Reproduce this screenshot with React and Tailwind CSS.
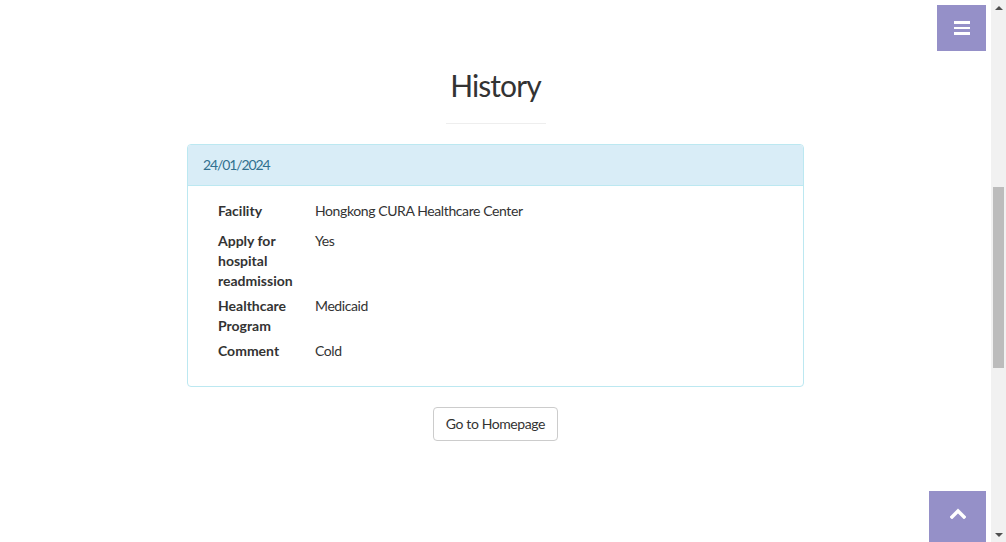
const rows = [
  { label: 'Facility', value: 'Hongkong CURA Healthcare Center', gap: 'mt-0' },
  { label: 'Apply for hospital readmission', value: 'Yes', gap: 'mt-[10px]' },
  { label: 'Healthcare Program', value: 'Medicaid', gap: 'mt-[5px]' },
  { label: 'Comment', value: 'Cold', gap: 'mt-[5px]' },
];

const Scrollbar = () => (
  <div className="flex h-full w-[15px] shrink-0 flex-col items-center bg-[#f1f1f1]">
    <div className="flex h-[15px] w-full items-center justify-center">
      <div className="h-0 w-0 border-x-[4px] border-b-[4px] border-x-transparent border-b-[#505050]" />
    </div>
    <div className="mt-[172px] h-[181px] w-[11px] bg-[#bcbcbc]" />
    <div className="flex-1" />
    <div className="flex h-[15px] w-full items-center justify-center">
      <div className="h-0 w-0 border-x-[4px] border-t-[4px] border-x-transparent border-t-[#505050]" />
    </div>
  </div>
);

const App = () => {
  return (
    <div className="relative flex h-[542px] w-[1006px] overflow-hidden bg-white text-[#333] font-['Lato','Liberation_Sans',sans-serif]">
      <main className="flex-1">
        <section className="flex flex-col items-center pt-[69px]">
          <h2 className="text-[30px] leading-[33px] font-normal tracking-[-0.9px] text-[#333]">History</h2>
          <div className="mt-[21px] w-[100px] border-t border-[#eee]" />

          <div className="mt-[20px] w-[617px] rounded-[4px] border border-[#bce8f1] overflow-hidden">
            <div className="bg-[#d9edf7] border-b border-[#bce8f1] px-[15px] py-[10px] text-[14px] leading-[20px] tracking-[-1.1px] text-[#31708f]">
              24/01/2024
            </div>
            <div className="px-[30px] pt-[15px] pb-[25px] text-[14px] leading-[20px]">
              {rows.map((r) => (
                <div key={r.label} className={`flex ${r.gap}`}>
                  <div className="w-[82px] shrink-0 font-bold">{r.label}</div>
                  <div className="ml-[15px] tracking-[-0.4px]">{r.value}</div>
                </div>
              ))}
            </div>
          </div>

          <button className="mt-[20px] rounded-[4px] border border-[#ccc] bg-white px-[12px] py-[6px] text-[14px] leading-[20px] tracking-[-0.4px] text-[#333]">
            Go to Homepage
          </button>
        </section>
      </main>

      <Scrollbar />

      {/* menu toggle */}
      <button className="absolute top-[5px] right-[20px] flex h-[46px] w-[49px] flex-col items-center justify-center gap-[3px] bg-[#9590c8]">
        <span className="block h-[2.5px] w-[16px] bg-white" />
        <span className="block h-[2.5px] w-[16px] bg-white" />
        <span className="block h-[2.5px] w-[16px] bg-white" />
      </button>

      {/* back to top */}
      <button className="absolute bottom-0 right-[20px] flex h-[51px] w-[57px] items-center justify-center bg-[#9590c8]">
        <svg width="16" height="11" viewBox="0 0 16 11" className="mb-[6px]">
          <polyline points="2,9 8,3 14,9" fill="none" stroke="white" strokeWidth="3.4" strokeLinecap="square" />
        </svg>
      </button>
    </div>
  );
};

export default App;
